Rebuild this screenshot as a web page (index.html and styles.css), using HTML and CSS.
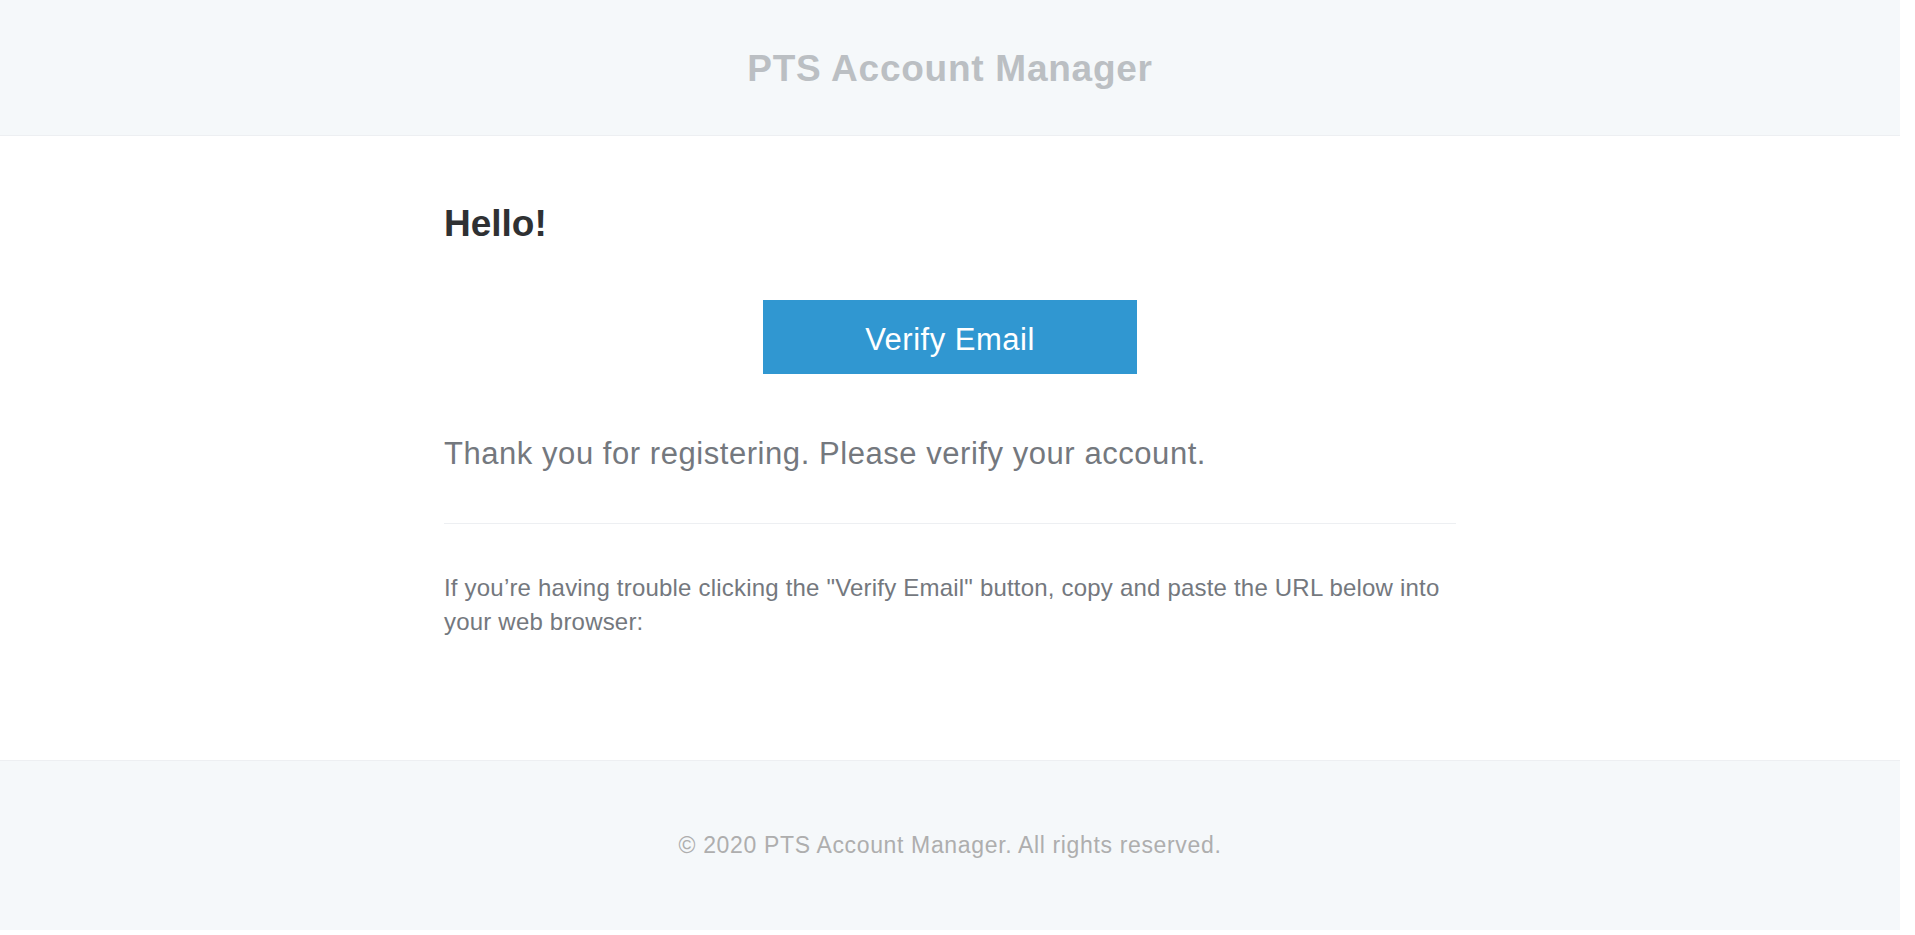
FILE: index.html
```html
<!DOCTYPE html>
<html lang="en">
<head>
  <meta charset="UTF-8" />
  <meta name="viewport" content="width=device-width, initial-scale=1.0"/>
  <title>Verify Email Address</title>
  <link rel="stylesheet" href="styles.css">
</head>
<body>
  <div class="wrapper">
    <header class="header">
      <a href="#">PTS Account Manager</a>
    </header>

    <main class="body">
      <div class="inner">
        <h1>Hello!</h1>
        <div class="action">
          <a href="#" class="button">Verify Email</a>
        </div>
        <p class="lead">Thank you for registering. Please verify your account.</p>
        <div class="subcopy">
          <p>If you’re having trouble clicking the "Verify Email" button, copy and paste the URL below into your web browser:</p>
        </div>
      </div>
    </main>

    <footer class="footer">
      <p>© 2020 PTS Account Manager. All rights reserved.</p>
    </footer>
  </div>
</body>
</html>
```

FILE: styles.css
```css
body {
  margin: 0;
  background-color: #ffffff;
  font-family: "Liberation Sans", Arial, sans-serif;
}
.wrapper {
  width: 1900px;
  height: 930px;
  background-color: #f5f8fa;
  display: flex;
  flex-direction: column;
}
.header {
  height: 135px;
  display: flex;
  align-items: center;
  justify-content: center;
}
.header a {
  color: #bbbfc3;
  font-size: 37px;
  font-weight: bold;
  letter-spacing: 0.75px;
  text-decoration: none;
  padding-top: 2px;
}
.body {
  background-color: #ffffff;
  border-top: 1px solid #edeff2;
  border-bottom: 1px solid #edeff2;
  height: 624px;
}
.inner {
  width: 1012px;
  margin: 0 auto;
  padding-top: 66px;
}
h1 {
  margin: 0;
  color: #2f3133;
  font-size: 37px;
  line-height: 44px;
  font-weight: bold;
}
.action {
  display: flex;
  justify-content: center;
  margin-top: 54px;
}
.button {
  box-sizing: border-box;
  width: 374px;
  height: 74px;
  padding-top: 5px;
  display: flex;
  align-items: center;
  justify-content: center;
  background-color: #3097d1;
  color: #ffffff;
  font-size: 31px;
  letter-spacing: 0.5px;
  text-decoration: none;
}
.lead {
  margin: 60px 0 0;
  color: #74787e;
  font-size: 31px;
  line-height: 40px;
  letter-spacing: 0.55px;
}
.subcopy {
  margin-top: 49px;
  border-top: 1px solid #edeff2;
  padding-top: 47px;
}
.subcopy p {
  margin: 0;
  color: #74787e;
  font-size: 24px;
  line-height: 34px;
  letter-spacing: 0.2px;
}
.footer {
  flex: 1;
  padding-top: 68px;
  text-align: center;
}
.footer p {
  margin: 0;
  color: #aeaeae;
  font-size: 23px;
  line-height: 33px;
  letter-spacing: 0.65px;
}
```
